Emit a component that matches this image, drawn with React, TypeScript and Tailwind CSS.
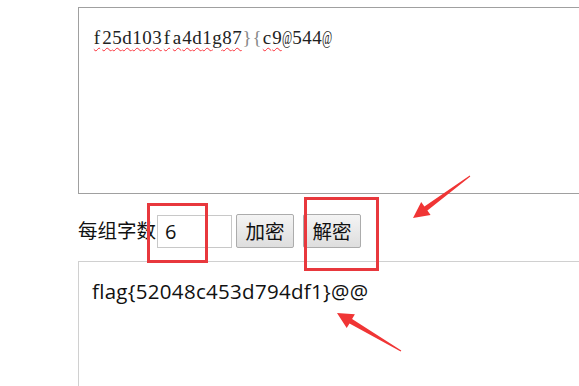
const CIPHER: { text: string; wavy?: boolean; light?: boolean }[] = [
  { text: "f25d103fa4d1g87", wavy: true },
  { text: "}{", light: true },
  { text: "c9", wavy: true },
  { text: "@544@" },
];

export default function App() {
  return (
    <div className="relative h-[386px] w-[579px] overflow-hidden bg-white pl-[78px] pt-[7px]">
      {/* ciphertext box */}
      <div className="h-[187px] w-[600px] border border-[#a0a0a0] pl-[13px] pt-[19px] font-['Liberation_Serif',serif] text-[19px] leading-[22px] text-[#222]">
        {CIPHER.map((part, i) =>
          part.text.split("").map((ch, j) => (
            <span
              key={`${i}-${j}`}
              className={`inline-block w-[10px] text-center ${
                part.wavy
                  ? "underline decoration-red-500 decoration-wavy decoration-1 underline-offset-[3px]"
                  : ""
              } ${part.light ? "text-[#888]" : ""}`}
            >
              {ch === "@" ? (
                <span className="-mx-[4px] inline-block w-[18px] scale-x-[0.58]">@</span>
              ) : (
                ch
              )}
            </span>
          ))
        )}
      </div>

      {/* controls */}
      <div className="mt-[20px] flex h-[34px] items-center font-['Open_Sans','Noto_Sans_CJK_SC',sans-serif] text-[#111]">
        <span className="text-[19.5px] leading-none">每组字数</span>
        <div className="ml-[1px] mt-[1px] flex h-[33px] w-[75px] items-center border border-[#c8c8c8] pl-[7px] text-[20px]">
          6
        </div>
        <button className="ml-[4px] h-[34px] w-[58px] rounded-[2px] border border-[#acacac] bg-gradient-to-b from-[#f4f4f4] to-[#dedede] font-['Noto_Sans_CJK_SC',sans-serif] text-[19.5px] leading-none">
          加密
        </button>
        <button className="ml-[9px] h-[34px] w-[58px] rounded-[2px] border border-[#acacac] bg-gradient-to-b from-[#f4f4f4] to-[#dedede] font-['Noto_Sans_CJK_SC',sans-serif] text-[19.5px] leading-none">
          解密
        </button>
      </div>

      {/* plaintext box */}
      <div className="mt-[13px] h-[200px] w-[600px] border border-[#d0d0d0] pl-[13px] pt-[15px] font-['Open_Sans',sans-serif] text-[20.5px] leading-[28px] tracking-[0.3px] text-[#111]">
        flag{"{"}52048c453d794df1{"}"}@@
      </div>

      {/* annotations */}
      <svg
        className="pointer-events-none absolute left-0 top-0"
        width="579"
        height="386"
        viewBox="0 0 579 386"
      >
        <rect x="148.5" y="204.5" width="58" height="57" fill="none" stroke="#e8383d" strokeWidth="3" />
        <rect x="305.5" y="198.5" width="72" height="71" fill="none" stroke="#e8383d" strokeWidth="3" />
        <polygon
          points="413,218 421.2,202.1 424.4,206.5 469.7,175.6 470.3,176.4 427.4,210.5 430.6,214.9"
          fill="#f03535"
        />
        <polygon
          points="337,313 354.9,314.3 352.1,319.1 401.3,350.6 400.7,351.4 349.5,323.4 346.7,328.1"
          fill="#f03535"
        />
      </svg>
    </div>
  );
}
